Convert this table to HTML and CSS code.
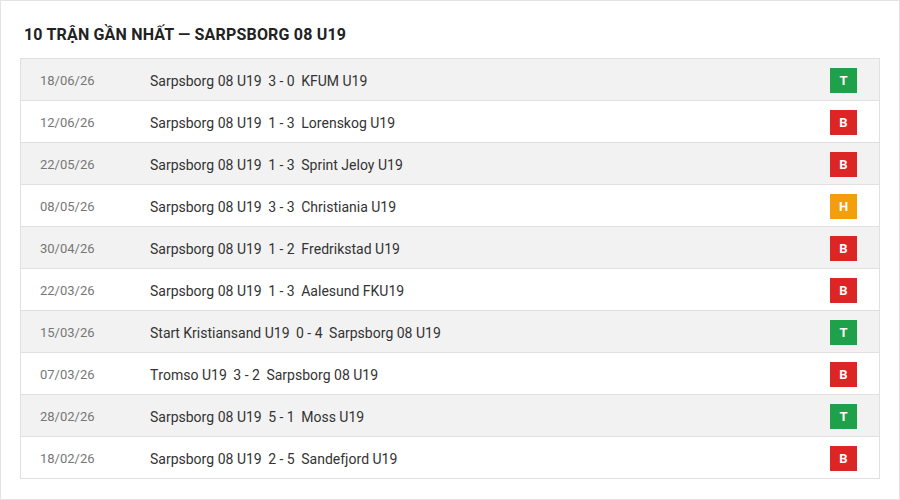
FILE: index.html
```html
<!DOCTYPE html>
<html>
<head>
<meta charset="utf-8">
<link rel="stylesheet" href="styles.css">
</head>
<body>
<div class="panel">
  <h2 class="title">10 TRẬN GẦN NHẤT — SARPSBORG 08 U19</h2>
  <div class="list">
    <div class="row"><span class="date">18/06/26</span><span class="match">Sarpsborg 08 U19 <span class="score">3 - 0</span> KFUM U19</span><span class="badge win">T</span></div>
    <div class="row"><span class="date">12/06/26</span><span class="match">Sarpsborg 08 U19 <span class="score">1 - 3</span> Lorenskog U19</span><span class="badge loss">B</span></div>
    <div class="row"><span class="date">22/05/26</span><span class="match">Sarpsborg 08 U19 <span class="score">1 - 3</span> Sprint Jeloy U19</span><span class="badge loss">B</span></div>
    <div class="row"><span class="date">08/05/26</span><span class="match">Sarpsborg 08 U19 <span class="score">3 - 3</span> Christiania U19</span><span class="badge draw">H</span></div>
    <div class="row"><span class="date">30/04/26</span><span class="match">Sarpsborg 08 U19 <span class="score">1 - 2</span> Fredrikstad U19</span><span class="badge loss">B</span></div>
    <div class="row"><span class="date">22/03/26</span><span class="match">Sarpsborg 08 U19 <span class="score">1 - 3</span> Aalesund FKU19</span><span class="badge loss">B</span></div>
    <div class="row"><span class="date">15/03/26</span><span class="match">Start Kristiansand U19 <span class="score">0 - 4</span> Sarpsborg 08 U19</span><span class="badge win">T</span></div>
    <div class="row"><span class="date">07/03/26</span><span class="match">Tromso U19 <span class="score">3 - 2</span> Sarpsborg 08 U19</span><span class="badge loss">B</span></div>
    <div class="row"><span class="date">28/02/26</span><span class="match">Sarpsborg 08 U19 <span class="score">5 - 1</span> Moss U19</span><span class="badge win">T</span></div>
    <div class="row"><span class="date">18/02/26</span><span class="match">Sarpsborg 08 U19 <span class="score">2 - 5</span> Sandefjord U19</span><span class="badge loss">B</span></div>
  </div>
</div>
</body>
</html>
```
FILE: styles.css
```css
html, body {
  margin: 0;
  padding: 0;
  background: #fff;
}
body {
  font-family: Roboto, "Liberation Sans", sans-serif;
  color: #333;
}
.panel {
  box-sizing: border-box;
  width: 900px;
  height: 500px;
  border: 1px solid #e3e3e3;
  padding: 0 19px;
}
.title {
  margin: 0;
  height: 57px;
  display: flex;
  align-items: center;
  padding-left: 4px;
  padding-top: 10px;
  box-sizing: border-box;
  font-size: 16px;
  letter-spacing: 0.18px;
  font-weight: 700;
  color: #222;
}
.list {
  border: 1px solid #e0e0e0;
}
.row {
  display: flex;
  align-items: center;
  box-sizing: border-box;
  height: 42px;
  padding: 2px 22px 0 19px;
  border-top: 1px solid #e0e0e0;
}
.row:first-child {
  border-top: none;
  height: 41px;
}
.row:nth-child(odd) {
  background: #f2f2f2;
}
.date {
  width: 110px;
  font-size: 13px;
  color: #777;
}
.match {
  flex: 1;
  font-size: 14px;
  color: #333;
  font-kerning: none;
}
.score {
  margin: 0 3px;
}
.badge {
  width: 27px;
  height: 25px;
  display: flex;
  align-items: center;
  justify-content: center;
  color: #fff;
  font-size: 13px;
  font-weight: 700;
}
.win { background: #1fa04a; }
.loss { background: #dc2626; }
.draw { background: #f59e0b; }
```
